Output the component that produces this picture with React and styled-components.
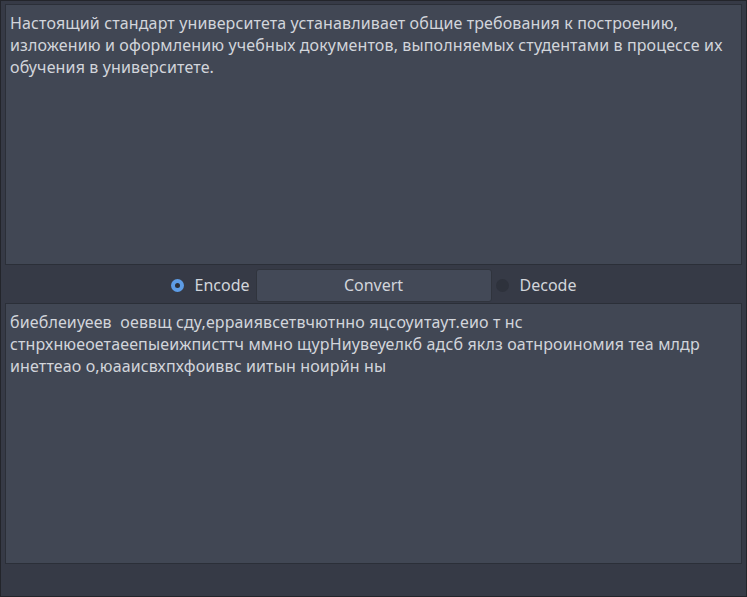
import React from "react";
import styled, { createGlobalStyle } from "styled-components";

const Global = createGlobalStyle`
  html, body { margin: 0; padding: 0; background: #202228; }
  #root { width: 747px; height: 597px; }
  * { box-sizing: border-box; }
`;

const Window = styled.div`
  width: 747px;
  height: 597px;
  background: #363a46;
  border: 1px solid #23252b;
  padding: 3px 4px 32px 4px;
  display: flex;
  flex-direction: column;
  font-family: "Noto Sans", sans-serif;
  font-size: 16px;
  color: #d2d5db;
`;

const TextBox = styled.div`
  flex: 1;
  background: #414754;
  border: 1px solid #2b2f38;
  padding: 7px 4px;
  line-height: 22px;
  letter-spacing: 0.13px;
  white-space: pre;
  overflow: hidden;
`;

const Row = styled.div`
  height: 38px;
  display: flex;
  align-items: center;
  justify-content: center;
  padding-top: 2px;
`;

const Radio = styled.div`
  display: flex;
  align-items: center;
  height: 32px;
`;

const Dot = styled.span`
  width: 13px;
  height: 13px;
  border-radius: 50%;
  margin-right: 11px;
  background: ${(p) => (p.$on ? "#5d9ce6" : "#2e323c")};
  display: flex;
  align-items: center;
  justify-content: center;
  &::after {
    content: "";
    width: 5px;
    height: 5px;
    border-radius: 50%;
    background: ${(p) => (p.$on ? "#2b2f38" : "transparent")};
  }
`;

const Button = styled.button`
  width: 236px;
  height: 33px;
  margin: 0 4px 0 6px;
  background: #434957;
  border: 1px solid #30343d;
  border-radius: 3px;
  color: #d2d5db;
  font-family: "Noto Sans", sans-serif;
  font-size: 16px;
  padding: 0;
`;

const top = [
  "Настоящий стандарт университета устанавливает общие требования к построению,",
  "изложению и оформлению учебных документов, выполняемых студентами в процессе их",
  "обучения в университете.",
];

const bottom = [
  "биеблеиуеев  оеввщ сду,ерраиявсетвчютнно яцсоуитаут.еио т нс",
  "стнрхнюеоетаеепыеижписттч ммно щурНиувеуелкб адсб яклз оатнроиномия теа млдр",
  "инеттеао о,юааисвхпхфоиввс иитын ноирйн ны",
];

export default function App() {
  return (
    <>
      <Global />
      <Window>
        <TextBox>{top.join("\n")}</TextBox>
        <Row>
          <Radio>
            <Dot $on />
            Encode
          </Radio>
          <Button>Convert</Button>
          <Radio>
            <Dot />
            Decode
          </Radio>
        </Row>
        <TextBox>{bottom.join("\n")}</TextBox>
      </Window>
    </>
  );
}
